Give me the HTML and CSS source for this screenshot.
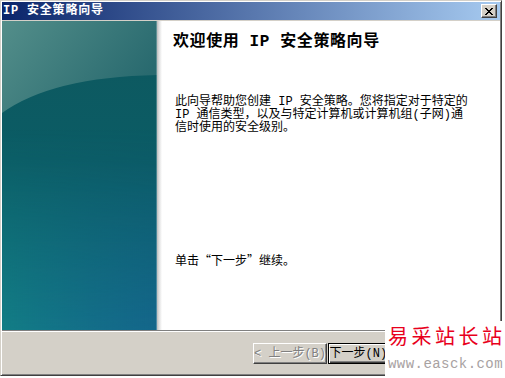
FILE: index.html
```html
<!DOCTYPE html>
<html lang="zh-CN">
<head>
<meta charset="utf-8">
<title>IP 安全策略向导</title>
<link rel="stylesheet" href="styles.css">
</head>
<body>
<div class="window">
  <div class="titlebar">
    <span class="title">IP 安全策略向导</span>
    <button class="close" aria-label="关闭"><svg width="8" height="7" viewBox="0 0 8 7" shape-rendering="crispEdges"><path d="M0 0h2v1H0zM6 0h2v1H6zM1 1h2v1H1zM5 1h2v1H5zM2 2h4v1H2zM3 3h2v1H3zM2 4h4v1H2zM1 5h2v1H1zM5 5h2v1H5zM0 6h2v1H0zM6 6h2v1H6z"/></svg></button>
  </div>
  <div class="body">
    <div class="side">
      <svg class="art" width="155" height="309" viewBox="0 0 155 309">
        <defs>
          <linearGradient id="base" x1="0" y1="0" x2="0" y2="1">
            <stop offset="0" stop-color="#0e585e"/>
            <stop offset="0.45" stop-color="#0b5c65"/>
            <stop offset="1" stop-color="#117182"/>
          </linearGradient>
          <linearGradient id="tint" x1="0" y1="0" x2="1" y2="0">
            <stop offset="0" stop-color="#14908a" stop-opacity="0.4"/>
            <stop offset="1" stop-color="#1a4da0" stop-opacity="0.3"/>
          </linearGradient>
          <linearGradient id="mv" x1="0" y1="0" x2="0" y2="1">
            <stop offset="0.35" stop-color="#000"/>
            <stop offset="1" stop-color="#fff"/>
          </linearGradient>
          <mask id="m"><rect width="155" height="309" fill="url(#mv)"/></mask>
          <linearGradient id="top" x1="0" y1="0" x2="1" y2="0.45">
            <stop offset="0" stop-color="#538e8a"/>
            <stop offset="1" stop-color="#296a6f"/>
          </linearGradient>
        </defs>
        <rect width="155" height="309" fill="url(#base)"/>
        <rect width="155" height="309" fill="url(#tint)" mask="url(#m)"/>
        <path d="M0 0H155V54Q50 56 0 92Z" fill="url(#top)"/>
        <line x1="154.5" y1="0" x2="154.5" y2="309" stroke="#fff" stroke-opacity="0.25"/>
      </svg>
    </div>
    <div class="content">
      <h1 class="heading">欢迎使用 IP 安全策略向导</h1>
      <p class="desc">此向导帮助您创建 IP 安全策略。您将指定对于特定的<br>IP 通信类型，以及与特定计算机或计算机组(子网)通<br>信时使用的安全级别。</p>
      <p class="hint">单击“下一步”继续。</p>
    </div>
  </div>
  <div class="buttons">
    <button class="btn btn-prev" disabled>&lt; 上一步(B)</button>
    <button class="btn btn-next btn-default">下一步(N) &gt;</button>
  </div>
</div>
<div class="watermark">
  <div class="wm-cn">易采站长站</div>
  <div class="wm-url">www.easck.com</div>
</div>
</body>
</html>
```
FILE: styles.css
```css
* { box-sizing: border-box; }
html, body { margin: 0; padding: 0; }
body {
  width: 505px;
  height: 378px;
  background: #fff;
  overflow: hidden;
  position: relative;
  font-family: "Noto Sans CJK SC", sans-serif;
  font-size: 12px;
  color: #000;
}
.window {
  width: 502px;
  height: 376px;
  display: flex;
  flex-direction: column;
  border: 1px solid;
  border-color: #d4d0c8 #404040 #404040 #d4d0c8;
  box-shadow: inset 1px 1px #fff, inset -1px -1px #808080;
  padding: 1px;
  background: #d4d0c8;
}
.titlebar {
  height: 18px;
  flex: none;
  display: flex;
  align-items: center;
  justify-content: space-between;
  padding: 0 3px 0 1px;
  margin-bottom: 1px;
  background: linear-gradient(to right, #0a246a, #a6caf0);
}
.title {
  color: #fff;
  font: bold 12px/12px "Liberation Mono", "Noto Sans CJK SC", monospace;
  letter-spacing: 0.8px;
  white-space: nowrap;
}
.close {
  width: 16px;
  height: 14px;
  padding: 0;
  margin: 0;
  border: 1px solid;
  border-color: #fff #404040 #404040 #fff;
  box-shadow: inset -1px -1px #808080;
  background: #d4d0c8;
  display: flex;
  align-items: center;
  justify-content: center;
}
.close svg { display: block; fill: #000; }
.body {
  height: 309px;
  flex: none;
  display: flex;
  background: #fff;
}
.side {
  width: 160px;
  flex: none;
  display: flex;
  background: linear-gradient(to right, transparent 155px, #bcbcbc 155px, #dedede 157px, #f4f4f4 159px, #fff 160px);
}
.art { display: block; flex: none; }
.content {
  flex: 1;
  display: flex;
  flex-direction: column;
  padding: 13px 0 0 13px;
}
.heading {
  margin: 0 0 0 -2px;
  font: bold 16px/16px "Liberation Mono", "Noto Sans CJK SC", monospace;
  letter-spacing: 0.6px;
  white-space: nowrap;
}
.desc {
  margin: 46px 0 0;
  font: 12px/13px "Liberation Mono", "Noto Sans CJK SC", monospace;
  white-space: nowrap;
}
.hint {
  margin: auto 0 64px;
  font: 12px/12px "Noto Sans CJK SC", sans-serif;
}
.buttons {
  height: 44px;
  flex: none;
  display: flex;
  justify-content: flex-end;
  align-items: flex-start;
  padding: 12px 97px 0 0;
  border-top: 1px solid #808080;
  box-shadow: inset 0 1px #fff;
}
.btn {
  height: 21px;
  width: 75px;
  padding: 0;
  margin: 0;
  font: 12px/12px "Liberation Mono", "Noto Sans CJK SC", monospace;
  color: #000;
  background: #d4d0c8;
  border: 1px solid;
  border-color: #fff #404040 #404040 #fff;
  box-shadow: inset -1px -1px #808080;
  white-space: nowrap;
}
.btn-prev { width: 74px; }
.btn-prev:disabled { color: #808080; text-shadow: 1px 1px #fff; }
.btn-next { margin-left: 1px; }
.btn-default {
  border-color: #000;
  box-shadow: inset 1px 1px #fff, inset -1px -1px #404040, inset -2px -2px #808080;
}
.watermark {
  position: absolute;
  left: 385px;
  top: 321px;
  width: 120px;
  height: 57px;
  background: #fff;
  padding: 5px 0 0 3px;
}
.wm-cn {
  color: #e8001c;
  font: 20px/20px "Noto Sans CJK SC", sans-serif;
  letter-spacing: 3.5px;
  white-space: nowrap;
}
.wm-url {
  margin-top: 11px;
  color: #a8a2a2;
  font: 14px/14px "Liberation Mono", monospace;
  letter-spacing: 0.45px;
  white-space: nowrap;
}
```
